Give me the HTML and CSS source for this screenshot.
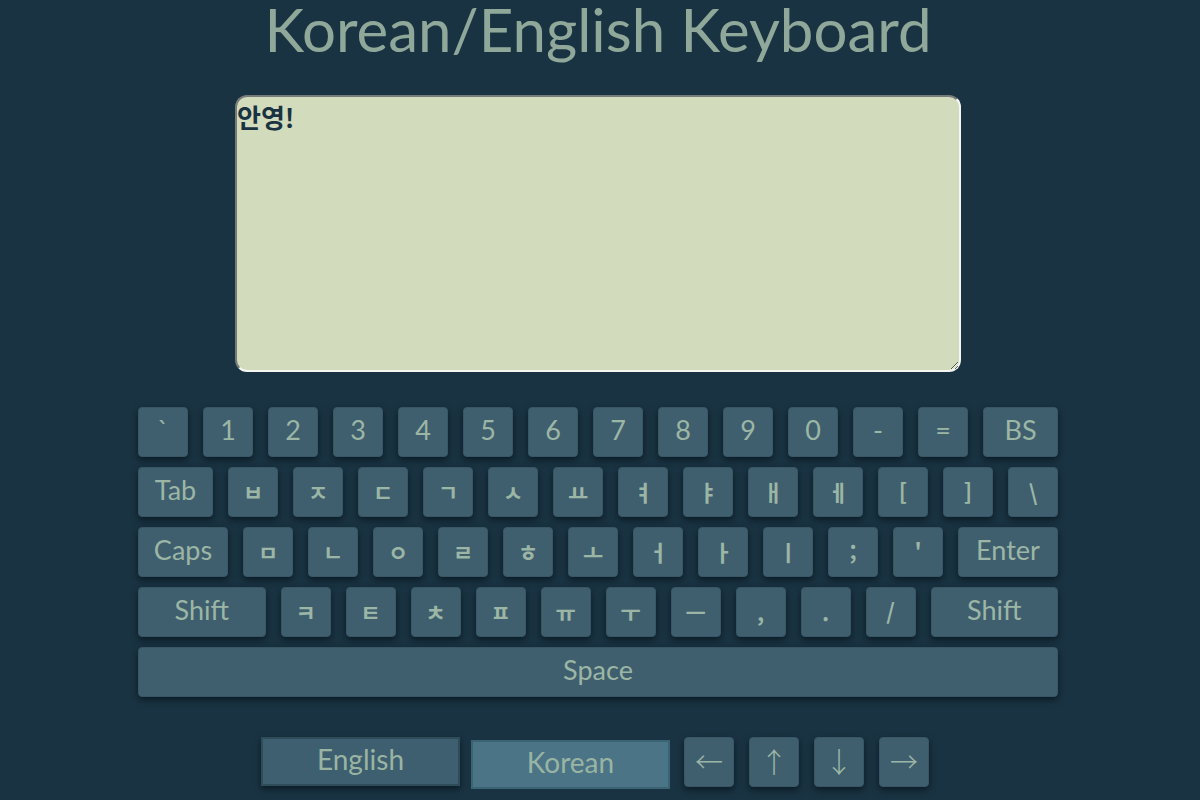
FILE: index.html
```html
<!DOCTYPE html>
<html lang="ko">
<head>
<meta charset="utf-8">
<title>Korean/English Keyboard</title>
<link rel="stylesheet" href="styles.css">
</head>
<body>
<main class="page">
  <h1 class="title">Korean/English Keyboard</h1>
  <div class="editor">
    <textarea class="textbox">안영!</textarea>
  </div>
  <div class="keyboard">
    <div class="row">
      <div class="key">`</div><div class="key">1</div><div class="key">2</div><div class="key">3</div><div class="key">4</div><div class="key">5</div><div class="key">6</div><div class="key">7</div><div class="key">8</div><div class="key">9</div><div class="key">0</div><div class="key">-</div><div class="key">=</div><div class="key wide-bs">BS</div>
    </div>
    <div class="row">
      <div class="key wide-tab">Tab</div><div class="key jamo">ㅂ</div><div class="key jamo">ㅈ</div><div class="key jamo">ㄷ</div><div class="key jamo">ㄱ</div><div class="key jamo">ㅅ</div><div class="key jamo">ㅛ</div><div class="key jamo">ㅕ</div><div class="key jamo">ㅑ</div><div class="key jamo">ㅐ</div><div class="key jamo">ㅔ</div><div class="key jamo">[</div><div class="key jamo">]</div><div class="key jamo">\</div>
    </div>
    <div class="row">
      <div class="key wide-caps">Caps</div><div class="key jamo">ㅁ</div><div class="key jamo">ㄴ</div><div class="key jamo">ㅇ</div><div class="key jamo">ㄹ</div><div class="key jamo">ㅎ</div><div class="key jamo">ㅗ</div><div class="key jamo">ㅓ</div><div class="key jamo">ㅏ</div><div class="key jamo">ㅣ</div><div class="key jamo">;</div><div class="key jamo">'</div><div class="key wide-enter">Enter</div>
    </div>
    <div class="row">
      <div class="key wide-shift">Shift</div><div class="key jamo">ㅋ</div><div class="key jamo">ㅌ</div><div class="key jamo">ㅊ</div><div class="key jamo">ㅍ</div><div class="key jamo">ㅠ</div><div class="key jamo">ㅜ</div><div class="key jamo">ㅡ</div><div class="key jamo">,</div><div class="key jamo">.</div><div class="key jamo">/</div><div class="key wide-shift">Shift</div>
    </div>
    <div class="row">
      <div class="key space">Space</div>
    </div>
  </div>
  <div class="controls">
    <button class="mode">English</button>
    <button class="mode active">Korean</button>
    <div class="key arrow">←</div>
    <div class="key arrow">↑</div>
    <div class="key arrow">↓</div>
    <div class="key arrow">→</div>
  </div>
</main>
</body>
</html>
```

FILE: styles.css
```css
html, body {
  margin: 0;
  padding: 0;
  background: #1a3342;
  height: 100%;
  overflow: hidden;
}

.page {
  width: 1196px;
  display: flex;
  flex-direction: column;
  align-items: center;
  font-family: Lato, "Noto Sans CJK KR", sans-serif;
  color: #9ab4a3;
}

.title {
  margin: 0;
  font-size: 60px;
  font-weight: 400;
  line-height: 58px;
  color: #8fa89a;
  letter-spacing: 0;
}

.editor {
  margin-top: 37px;
}

.textbox {
  display: block;
  width: 726px;
  height: 277px;
  box-sizing: border-box;
  margin: 0;
  padding: 0;
  background: #d2dbbc;
  border-width: 2px;
  border-style: solid;
  border-color: #767b7a #f5f5f2 #f5f5f2 #767b7a;
  border-radius: 12px;
  font-family: "Noto Sans CJK KR", sans-serif;
  font-size: 26px;
  font-weight: 700;
  line-height: 40px;
  color: #1a3342;
  outline: none;
}

.keyboard {
  width: 920px;
  margin-top: 35px;
  display: flex;
  flex-direction: column;
  gap: 10px;
}

.row {
  display: flex;
  gap: 15px;
}

.key {
  width: 50px;
  height: 50px;
  flex: none;
  box-sizing: border-box;
  display: flex;
  align-items: center;
  justify-content: center;
  padding-bottom: 5px;
  background: #3f5f6f;
  border: 1px solid #385666;
  border-radius: 4px;
  box-shadow: 0 3px 6px rgba(5, 20, 28, 0.75);
  font-size: 27px;
  color: #9cb6a5;
}

.jamo {
  padding-bottom: 2px;
  font-size: 22px;
  font-family: "Noto Sans CJK KR", sans-serif;
  font-weight: 700;
}

.wide-bs, .wide-tab { width: 75px; }
.wide-caps { width: 90px; }
.wide-enter { width: 100px; }
.wide-shift { width: 127.5px; }
.space { width: 920px; }

.controls {
  margin-top: 40px;
  display: flex;
  align-items: flex-start;
  margin-left: -6px;
}

.mode {
  width: 199px;
  height: 49px;
  box-sizing: border-box;
  margin: 0;
  padding: 0 0 5px;
  background: #3e5f6f;
  border: 2px solid #2f4c5a;
  box-shadow: 0 3px 6px rgba(5, 20, 28, 0.75);
  font-family: Lato, sans-serif;
  font-size: 28px;
  color: #9ab4a3;
}

.mode.active {
  margin-left: 11px;
  transform: translateY(3px);
  background: #4b7487;
  border-color: #3a6374;
  box-shadow: none;
}

.arrow {
  margin-left: 14px;
  padding-bottom: 2px;
  font-family: "Noto Sans CJK KR", sans-serif;
  font-size: 28px;
  font-weight: 300;
}

.arrow + .arrow {
  margin-left: 15px;
}
```
